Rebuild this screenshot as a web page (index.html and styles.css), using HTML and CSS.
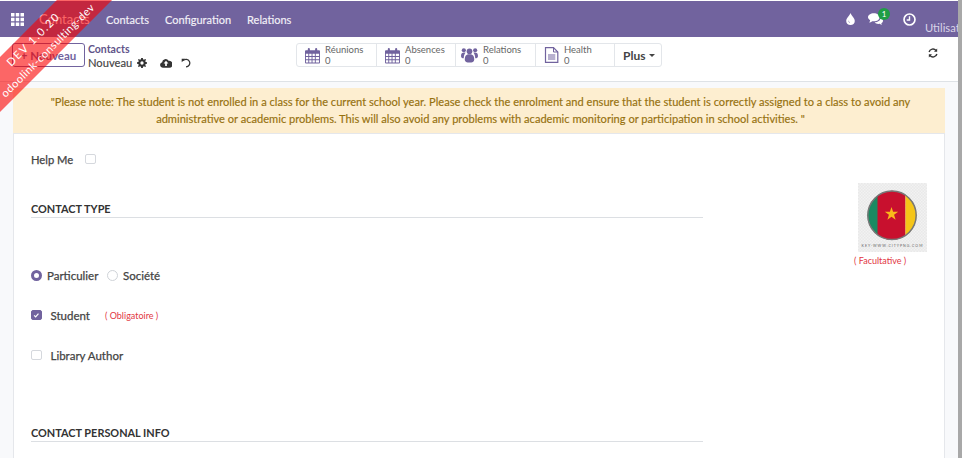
FILE: index.html
```html
<!DOCTYPE html>
<html lang="fr">
<head>
<meta charset="utf-8">
<title>Contacts</title>
<link rel="stylesheet" href="styles.css">
</head>
<body>
<div class="shell">
  <div class="main">
    <nav class="navbar">
      <svg class="apps" viewBox="0 0 13 13"><path d="M0 0h3.500v3.500H0zM4.750 0h3.500v3.500h-3.500zM9.500 0H13v3.500H9.500zM0 4.750h3.500v3.500H0zM4.750 4.750h3.500v3.500h-3.500zM9.500 4.750H13v3.500H9.500zM0 9.500h3.500V13H0zM4.750 9.500h3.500V13h-3.500zM9.500 9.500H13V13H9.500z"/></svg>
      <span class="brand">Contacts</span>
      <a class="nav-link">Contacts</a>
      <a class="nav-link">Configuration</a>
      <a class="nav-link">Relations</a>
      <div class="systray">
        <svg class="tray tint" viewBox="0 0 10 14"><path fill-rule="evenodd" d="M5 0C5.600 2.600 10 6 10 9.200 10 12 7.800 14 5 14S0 12 0 9.200C0 6 4.400 2.600 5 0zM3 8.500C2.400 9.800 3 11.500 4.600 11.800 3.700 11 3.400 10 3 8.500z"/></svg>
        <span class="chat">
          <svg class="tray" viewBox="0 0 18 14"><path d="M7 0c3.900 0 7 2.200 7 4.900S10.900 9.800 7 9.800c-.7 0-1.300-.1-1.900-.2C4 10.500 2.700 11 1.300 11.100c.7-.8 1.200-1.700 1.300-2.700C1 7.500 0 6.300 0 4.900 0 2.200 3.100 0 7 0z"/><path d="M15 5.500c1.800.7 3 2 3 3.500 0 1.200-.8 2.300-2 3 .1.800.5 1.400 1 2-1.100-.1-2.100-.5-2.900-1.200-.5.100-1 .2-1.600.2-2 0-3.700-.9-4.500-2.100 3.900 0 7-2 7-5.400z"/></svg>
          <span class="badge">1</span>
        </span>
        <svg class="tray clock" viewBox="0 0 14 14"><circle cx="7" cy="7" r="5.900" fill="none" stroke="#fff" stroke-width="1.800"/><path d="M7 3.500V7.500H4" fill="none" stroke="#fff" stroke-width="1.500"/></svg>
        <span class="user">Utilisateur</span>
      </div>
    </nav>

    <header class="control">
      <button class="new-btn"><span class="plus">+</span> Nouveau</button>
      <div class="crumbs">
        <a class="crumb">Contacts</a>
        <div class="crumb-row">
          <span class="crumb-cur">Nouveau</span>
          <svg class="gear" viewBox="0 0 12 12"><path fill-rule="evenodd" d="M5 0h2l.3 1.600 1.100.5L9.800 1.200l1.100 1-1 1.400.5 1.100L12 5v2l-1.600.3-.5 1.100.9 1.400-1 1.100-1.400-1-1.100.5L7 12H5l-.3-1.600-1.100-.5-1.400.9-1.100-1 1-1.400-.5-1.100L0 7V5l1.600-.3.5-1.100-.9-1.400 1-1.100 1.400 1 1.100-.5zM6 4a2 2 0 100 4 2 2 0 000-4z"/></svg>
          <svg class="cloud" viewBox="0 0 14 11"><path fill-rule="evenodd" d="M3.200 11A3.200 3.200 0 012.500 4.700 4 4 0 0110 3a3.100 3.100 0 011 8zM7 3 4.200 6.200H6V9H8V6.200H9.800z"/></svg>
          <svg class="undo" viewBox="0 0 12 12"><path d="M2.600 3.200A4.500 4.500 0 116 10.600" fill="none" stroke="#333" stroke-width="1.500"/><path d="M.8 .8 5.200 .9 .9 5.200z"/></svg>
        </div>
      </div>
      <div class="stats">
        <div class="stat s1">
          <svg class="stat-ico" viewBox="0 0 16 17"><path fill-rule="evenodd" d="M1 3h2V1.500a1 1 0 012.200 0V3h5.600V1.500a1 1 0 012.200 0V3h2a1 1 0 011 1V16a1 1 0 01-1 1H1a1 1 0 01-1-1V4a1 1 0 011-1zM1 6.500V9h2.500V6.500zM4.500 6.500V9H7V6.500zM8 6.500V9h2.500V6.500zM11.500 6.500V9H15V6.500zM1 10v2.500h2.500V10zM4.500 10v2.500H7V10zM8 10v2.500h2.500V10zM11.500 10v2.500H15V10zM1 13.500V16h2.500v-2.500zM4.500 13.500V16H7v-2.500zM8 13.500V16h2.500v-2.500zM11.500 13.500V16H15v-2.500z"/></svg>
          <div class="stat-text"><span>Réunions</span><span>0</span></div>
        </div>
        <div class="stat s2">
          <svg class="stat-ico" viewBox="0 0 16 17"><path fill-rule="evenodd" d="M1 3h2V1.500a1 1 0 012.200 0V3h5.600V1.500a1 1 0 012.200 0V3h2a1 1 0 011 1V16a1 1 0 01-1 1H1a1 1 0 01-1-1V4a1 1 0 011-1zM1 6.500V9h2.500V6.500zM4.500 6.500V9H7V6.500zM8 6.500V9h2.500V6.500zM11.500 6.500V9H15V6.500zM1 10v2.500h2.500V10zM4.500 10v2.500H7V10zM8 10v2.500h2.500V10zM11.500 10v2.500H15V10zM1 13.500V16h2.500v-2.500zM4.500 13.500V16H7v-2.500zM8 13.500V16h2.500v-2.500zM11.500 13.500V16H15v-2.500z"/></svg>
          <div class="stat-text"><span>Absences</span><span>0</span></div>
        </div>
        <div class="stat s3">
          <svg class="stat-ico wide" viewBox="0 0 18 16"><circle cx="9" cy="4" r="3"/><circle cx="3" cy="3" r="2.200"/><circle cx="15" cy="3" r="2.200"/><path d="M4 13c0-4 1.500-5.800 5-5.800s5 1.800 5 5.800c0 2-2 3-5 3s-5-1-5-3z"/><path d="M0 9c0-2.500 1-3.700 3.500-3.700.5 0 1 .1 1.400.3-1 1-1.900 2.500-2 5.900C1 11.500 0 10.500 0 9zM18 9c0-2.500-1-3.700-3.500-3.700-.5 0-1 .1-1.400.3 1 1 1.900 2.500 2 5.900 1.900 0 2.900-1 2.900-2.500z"/></svg>
          <div class="stat-text"><span>Relations</span><span>0</span></div>
        </div>
        <div class="stat s4">
          <svg class="stat-ico file" viewBox="0 0 14 16"><path d="M1 .7H9L13.300 5V15.300H1z" fill="none" stroke="#71639e" stroke-width="1.200"/><path d="M9 .7V5H13.300M3.500 8H10.800M3.500 10H10.800M3.500 12H10.800" fill="none" stroke="#71639e" stroke-width="1"/></svg>
          <div class="stat-text"><span>Health</span><span>0</span></div>
        </div>
        <div class="stat more">Plus <i class="caret"></i></div>
      </div>
      <svg class="refresh" viewBox="0 0 12 12"><path d="M1.300 4.800A4.800 4.800 0 019.600 3M10.700 7.200A4.800 4.800 0 012.400 9" fill="none" stroke="#333" stroke-width="1.700"/><path d="M11 .6V4.400H7.200zM1 11.400V7.600H4.800z"/></svg>
    </header>

    <div class="content">
      <div class="alert">"Please note: The student is not enrolled in a class for the current school year. Please check the enrolment and ensure that the student is correctly assigned to a class to avoid any administrative or academic problems. This will also avoid any problems with academic monitoring or participation in school activities. "</div>
      <section class="card">
        <div class="form">
          <div class="row help"><span class="label">Help Me</span><i class="check"></i></div>
          <h2 class="heading first">CONTACT TYPE</h2>
          <div class="row radios">
            <i class="radio on"></i><span class="label r1">Particulier</span>
            <i class="radio"></i><span class="label r2">Société</span>
          </div>
          <div class="row opt">
            <i class="check on"><svg viewBox="0 0 10 10"><path d="M2.500 5.200 4.300 7 7.600 3.200" fill="none" stroke="#fff" stroke-width="1.400"/></svg></i>
            <span class="label opt-label">Student</span><span class="req">( Obligatoire )</span>
          </div>
          <div class="row opt">
            <i class="check"></i><span class="label opt-label">Library Author</span>
          </div>
          <h2 class="heading last">CONTACT PERSONAL INFO</h2>
        </div>
        <aside class="side">
          <svg class="flag" viewBox="0 0 69 69">
            <defs>
              <pattern id="chk" width="3" height="3" patternUnits="userSpaceOnUse"><rect width="3" height="3" fill="#f2f2f2"/><rect width="1.500" height="1.500" fill="#e9e9e9"/><rect x="1.500" y="1.500" width="1.500" height="1.500" fill="#e9e9e9"/></pattern>
              <clipPath id="disc"><circle cx="34" cy="32.300" r="24.500"/></clipPath>
            </defs>
            <rect width="69" height="69" fill="url(#chk)"/>
            <g clip-path="url(#disc)">
              <rect x="9" y="7" width="11" height="51" fill="#1a8a62"/>
              <rect x="19.500" y="7" width="28" height="51" fill="#c8102e"/>
              <rect x="47.500" y="7" width="12" height="51" fill="#f5c518"/>
            </g>
            <circle cx="34" cy="32.300" r="24.200" fill="none" stroke="#777" stroke-width="1.500"/>
            <path d="M33.500 24 35.090 28.820 40.200 28.800 36.070 31.830 37.600 36.700 33.500 33.700 29.400 36.700 30.930 31.830 26.800 28.800 31.910 28.820z" fill="#f9b81b"/>
            <text class="flag-text" x="34.500" y="64" text-anchor="middle">KEY·WWW.CITYPNG.COM</text>
          </svg>
          <div class="opt-note">( Facultative )</div>
        </aside>
      </section>
    </div>
  </div>
  <div class="scroll"></div>
</div>
<div class="ribbon"><span class="rib-a">DEV 1.0.20</span><span class="rib-b">odoolink-consulting-dev</span></div>
</body>
</html>
```
FILE: styles.css
```css
* { box-sizing: border-box; }
html, body { margin: 0; height: 458px; overflow: hidden; }
body { font-family: Lato, "Noto Sans", sans-serif; font-size: 12px; color: #374151; background: #fff; position: relative; }
.shell { display: flex; height: 458px; }
.main { width: 958px; height: 458px; overflow: hidden; display: flex; flex-direction: column; }
.scroll { width: 4px; background: #a8a8a8; }

.navbar { margin-top: 1px; height: 36px; flex: none; background: #71639e; display: flex; align-items: center; padding-left: 11px; color: #fff; }
.apps { width: 13px; height: 13px; fill: #fff; }
.brand { margin-left: 15px; font-size: 13px; width: 51px; }
.nav-link { font-size: 11px; margin-left: 16px; color: #f3f1f8; -webkit-text-stroke: .15px #f3f1f8; }
.systray { margin-left: auto; display: flex; align-items: center; height: 36px; width: 112px; flex: none; }
.tray { fill: #fff; display: block; flex: none; }
.tint { width: 9px; height: 12px; }
.chat { margin-left: 13px; position: relative; display: block; flex: none; }
.chat .tray { width: 15px; height: 12px; }
.badge { position: absolute; left: 10px; top: -5px; width: 12px; height: 12px; border-radius: 50%; background: #1f9d45; color: #fff; font-size: 8px; line-height: 12px; text-align: center; }
.clock { width: 13px; height: 13px; margin-left: 20px; fill: none; }
.user { font-size: 11.200px; color: #d9d4e8; margin-left: 9px; padding-top: 16px; white-space: nowrap; }

.control { height: 45px; flex: none; background: #fff; border-bottom: 1px solid #dee2e6; display: flex; align-items: flex-start; padding: 6px 0 0 12px; position: relative; }
.new-btn { width: 73px; height: 24px; border: 1px solid #71639e; border-radius: 3px; background: #fff; color: #71639e; font: 700 11.500px Lato, sans-serif; padding: 0; white-space: nowrap; }
.plus { font-weight: 700; color: #71639e; }
.crumbs { margin-left: 3px; width: 208px; line-height: 13px; }
.crumb { display: block; color: #5f5489; font-size: 10.500px; font-weight: 700; }
.crumb-row { display: flex; align-items: center; font-size: 11.200px; color: #444; }
.crumb-cur { -webkit-text-stroke: .15px #444; }
.gear { width: 10px; height: 10px; margin-left: 5px; fill: #333; }
.cloud { width: 12px; height: 10px; margin-left: 13px; fill: #333; }
.undo { width: 10px; height: 10px; margin-left: 9px; fill: #333; }
.stats { display: flex; width: 366px; height: 24px; border: 1px solid #e3e6ea; border-radius: 3px; flex: none; }
.stat { display: flex; align-items: center; border-right: 1px solid #e3e6ea; padding-left: 8px; color: #555; }
.s1 { width: 80px; }
.s2 { width: 79px; }
.s3 { width: 80px; padding-left: 5px; }
.s4 { width: 79px; }
.more { flex: 1; border-right: 0; font-size: 12px; font-weight: 700; color: #444; }
.stat-ico { width: 15px; height: 17px; fill: #71639e; flex: none; }
.stat-ico.wide { width: 17px; height: 16px; }
.stat-ico.file { width: 15px; height: 16px; fill: none; }
.stat-text { display: flex; flex-direction: column; margin-left: 5px; font-size: 9.500px; line-height: 10.500px; color: #666; padding-top: 1px; }
.caret { display: inline-block; border: 3px solid transparent; border-top-color: #444; border-bottom: 0; margin-left: 4px; vertical-align: 2px; }
.refresh { position: absolute; left: 928px; top: 11px; width: 10px; height: 10px; fill: #333; }

.content { flex: 1; background: #f8f9fb; padding: 6px 13px 0 13px; }
.alert { height: 45px; width: 932px; background: #fdeed0; color: #96710f; font-size: 11.100px; line-height: 17px; text-align: center; padding: 5px 28px 0 31px; -webkit-text-stroke: .15px #96710f; }
.card { width: 932px; height: 330px; background: #fff; border: 1px solid #e5e7eb; display: flex; }
.form { width: 672px; margin-left: 17px; padding-top: 15px; }
.row { display: flex; align-items: center; height: 20px; }
.label { font-size: 11.500px; color: #444; font-weight: 400; -webkit-text-stroke: .25px #444; }
.help .label { width: 54px; font-size: 11.200px; }
.check { width: 10.500px; height: 10.500px; border: 1px solid #d5d8dd; border-radius: 2px; background: #fff; display: block; flex: none; }
.check.on { background: #71639e; border-color: #71639e; }
.check svg { display: block; width: 100%; height: 100%; }
.heading { margin: 0; font-size: 10.900px; font-weight: 700; color: #333; line-height: 14px; border-bottom: 1px solid #dcdfe3; height: 16px; }
.heading.first { margin-top: 33px; }
.radios { margin-top: 47px; }
.radio { width: 11px; height: 11px; border-radius: 50%; border: 1px solid #cfd3d8; background: #fff; flex: none; display: block; }
.radio.on { border: 3px solid #71639e; }
.r1 { margin-left: 5px; width: 60px; }
.r2 { margin-left: 5px; }
.opt { margin-top: 20px; }
.opt-label { margin-left: 9px; }
.req { color: #e2363f; font-size: 9px; margin-left: 15px; }
.heading.last { margin-top: 61px; }
.side { margin-left: 151px; padding-top: 49px; width: 73px; }
.flag { display: block; margin-left: 4px; width: 69px; height: 69px; }
.flag-text { font-size: 3.500px; fill: #666; letter-spacing: 1px; font-family: Lato, sans-serif; }
.opt-note { color: #e2363f; font-size: 9px; margin-top: 3px; white-space: nowrap; }

.ribbon { position: absolute; left: -108px; top: 23px; width: 300px; height: 39px; background: rgba(250, 0, 0, .6); transform: rotate(-45deg); color: #fff; display: flex; flex-direction: column; align-items: center; font-size: 11px; line-height: 18px; padding-top: 1.500px; }
.rib-a { letter-spacing: 1.500px; padding-right: 8px; }
.rib-b { letter-spacing: .45px; padding-right: 3px; }
```
